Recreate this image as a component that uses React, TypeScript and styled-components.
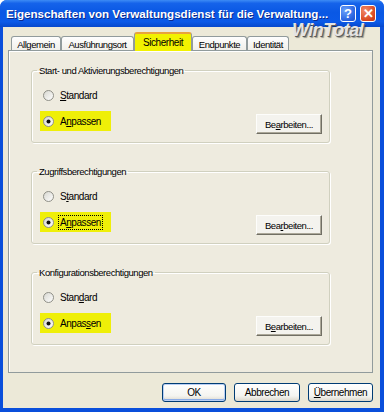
import React from 'react'
import styled, { createGlobalStyle } from 'styled-components'

const GlobalStyle = createGlobalStyle`
  html, body {
    margin: 0;
    padding: 0;
  }
  body {
    width: 384px;
    height: 412px;
    overflow: hidden;
    font-family: "Liberation Sans", Arial, sans-serif;
    font-size: 9.5px;
    letter-spacing: -0.45px;
    color: #000;
  }
`

const Window = styled.div`
  position: relative;
  width: 384px;
  height: 412px;
  box-sizing: border-box;
  display: flex;
  flex-direction: column;
  background: #0A4FDB;
  border-radius: 7px 7px 0 0;
  overflow: hidden;
`

const TitleBar = styled.div`
  height: 27px;
  flex: none;
  display: flex;
  align-items: center;
  padding: 0 8px 0 6px;
  background: linear-gradient(
    to bottom,
    #3d8cf5 0%,
    #1563ea 12%,
    #0a58e4 45%,
    #0b5ae8 80%,
    #0648cc 100%
  );
`

const Title = styled.div`
  flex: 1;
  color: #fff;
  font-weight: bold;
  font-size: 11.6px;
  letter-spacing: 0;
  white-space: nowrap;
  text-shadow: 1px 1px 0 #0c2a8c;
`

const TitleButton = styled.div<{ $kind: 'help' | 'close' }>`
  width: 16px;
  height: 17px;
  flex: none;
  box-sizing: border-box;
  margin-left: 4px;
  border: 1px solid #fff;
  border-radius: 3px;
  display: flex;
  align-items: center;
  justify-content: center;
  color: #fff;
  font-weight: bold;
  font-size: 13px;
  line-height: 14px;
  letter-spacing: 0;
  background: ${(p) =>
    p.$kind === 'close'
      ? 'radial-gradient(circle at 30% 30%, #f28b6a, #d9461f 70%, #c13a16)'
      : 'radial-gradient(circle at 30% 30%, #6aa2fb, #2963e0 70%, #1d4fc8)'};
`

const Watermark = styled.div`
  position: absolute;
  left: 292px;
  top: 23px;
  font-size: 18px;
  line-height: 14px;
  font-weight: bold;
  font-style: italic;
  letter-spacing: -0.5px;
  color: #e4e4e4;
  text-shadow: 1px 1px 0 #5a5a5a, 2px 2px 1px rgba(0, 0, 0, 0.35);
  pointer-events: none;
`

const Body = styled.div`
  flex: 1;
  margin: 0 4px 4px 3px;
  background: #ece9d8;
  display: flex;
  flex-direction: column;
  padding: 5px 7px 6px 5px;
`

const TabStrip = styled.div`
  display: flex;
  align-items: flex-end;
  height: 19px;
  margin: 0 0 -1px 3px;
  position: relative;
  z-index: 1;
`

const Tab = styled.div<{ $w: number; $active?: boolean }>`
  width: ${(p) => p.$w}px;
  height: ${(p) => (p.$active ? 19 : 14)}px;
  margin-bottom: ${(p) => (p.$active ? 0 : 1)}px;
  box-sizing: border-box;
  border: 1px solid #919b9c;
  border-bottom: none;
  border-top: ${(p) => (p.$active ? '2px solid #e8a33c' : '1px solid #919b9c')};
  border-radius: 3px 3px 0 0;
  background: ${(p) =>
    p.$active ? '#f2f200' : 'linear-gradient(to bottom, #fefefe, #f1f0ea)'};
  display: flex;
  align-items: center;
  justify-content: center;
  white-space: nowrap;
  font-size: ${(p) => (p.$active ? 10 : 9.5)}px;
  padding-top: ${(p) => (p.$active ? 0 : 1)}px;
`

const Panel = styled.div`
  height: 323px;
  flex: none;
  box-sizing: border-box;
  border: 1px solid #919b9c;
  box-shadow: inset 1px 1px 0 #fff;
  background: #eeebdf;
  padding: 14px 42px 0 22px;
  display: flex;
  flex-direction: column;
  gap: 23px;
`

const Group = styled.fieldset`
  margin: 0;
  min-width: 0;
  padding: 0 7px 8px 8px;
  border: 1px solid #d0d0bf;
  border-radius: 3px;
  box-shadow: 1px 1px 0 #fff, inset 1px 1px 0 #fff;
`

const Legend = styled.legend`
  padding: 0 2px;
  margin-left: -3px;
  line-height: 11px;
`

const Options = styled.div`
  display: flex;
  flex-direction: column;
  gap: 6px;
  margin-top: 9px;
`

const Row = styled.div`
  display: flex;
  justify-content: space-between;
  align-items: flex-start;
`

const Option = styled.label<{ $marked?: boolean }>`
  display: inline-flex;
  align-items: center;
  align-self: flex-start;
  gap: 5px;
  height: 20px;
  padding: 0 9px 0 3px;
  background: ${(p) => (p.$marked ? '#efef08' : 'transparent')};
`

const Caption = styled.span<{ $focus?: boolean }>`
  padding: 0 1px;
  outline: ${(p) => (p.$focus ? '1px dotted #000' : 'none')};
  line-height: 13px;
  font-size: 10px;
`

const Key = styled.u`
  text-decoration: underline;
`

const ClassicButton = styled.div`
  width: 66px;
  height: 20px;
  margin-top: 3px;
  box-sizing: border-box;
  border: 1px solid;
  border-color: #fdfdfb #716f64 #716f64 #fdfdfb;
  box-shadow: inset -1px -1px 0 #aca899;
  background: #f4f3ee;
  display: flex;
  align-items: center;
  justify-content: center;
`

const Footer = styled.div`
  display: flex;
  justify-content: flex-end;
  gap: 8px;
  margin-top: 10px;
`

const XpButton = styled.div<{ $w: number; $default?: boolean }>`
  width: ${(p) => p.$w}px;
  height: 19px;
  box-sizing: border-box;
  border: 1px solid #003c74;
  border-radius: 3px;
  background: linear-gradient(to bottom, #ffffff, #f4f4f0 70%, #dcd8cc);
  box-shadow: ${(p) =>
    p.$default ? 'inset 0 0 0 1px #b9cff4, inset 0 -1px 0 1px #8aabe6' : 'none'};
  display: flex;
  align-items: center;
  justify-content: center;
  font-size: 10px;
`

function Radio({ checked }: { checked?: boolean }) {
  return (
    <svg width="11" height="11" viewBox="0 0 11 11">
      <defs>
        <linearGradient id="rg" x1="0" y1="0" x2="1" y2="1">
          <stop offset="0" stopColor="#d6d6cf" />
          <stop offset="1" stopColor="#ffffff" />
        </linearGradient>
      </defs>
      <circle cx="5.5" cy="5.5" r="5" fill="url(#rg)" stroke="#8f8f87" strokeWidth="1" />
      {checked && <circle cx="5.5" cy="5.5" r="2" fill="#111" />}
    </svg>
  )
}

type GroupData = {
  title: string
  standard: [string, string, string]
  custom: [string, string, string]
  edit: [string, string, string]
  focus?: boolean
}

const groups: GroupData[] = [
  {
    title: 'Start- und Aktivierungsberechtigungen',
    standard: ['', 'S', 'tandard'],
    custom: ['A', 'n', 'passen'],
    edit: ['Be', 'a', 'rbeiten...'],
  },
  {
    title: 'Zugriffsberechtigungen',
    standard: ['S', 't', 'andard'],
    custom: ['A', 'n', 'passen'],
    edit: ['Bea', 'r', 'beiten...'],
    focus: true,
  },
  {
    title: 'Konfigurationsberechtigungen',
    standard: ['Stan', 'd', 'ard'],
    custom: ['Anpas', 's', 'en'],
    edit: ['B', 'e', 'arbeiten...'],
  },
]

const Label = ({ parts }: { parts: [string, string, string] }) => (
  <>
    {parts[0]}
    <Key>{parts[1]}</Key>
    {parts[2]}
  </>
)

export default function App() {
  return (
    <Window>
      <GlobalStyle />
      <TitleBar>
        <Title>Eigenschaften von Verwaltungsdienst für die Verwaltung...</Title>
        <TitleButton $kind="help">?</TitleButton>
        <TitleButton $kind="close">✕</TitleButton>
      </TitleBar>
      <Watermark>WinTotal</Watermark>
      <Body>
        <TabStrip>
          <Tab $w={50}>Allgemein</Tab>
          <Tab $w={73}>Ausführungsort</Tab>
          <Tab $w={58} $active>
            Sicherheit
          </Tab>
          <Tab $w={55}>Endpunkte</Tab>
          <Tab $w={42}>Identität</Tab>
        </TabStrip>
        <Panel>
          {groups.map((g) => (
            <Group key={g.title}>
              <Legend>{g.title}</Legend>
              <Options>
                <Option>
                  <Radio />
                  <Caption>
                    <Label parts={g.standard} />
                  </Caption>
                </Option>
                <Row>
                  <Option $marked>
                    <Radio checked />
                    <Caption $focus={g.focus}>
                      <Label parts={g.custom} />
                    </Caption>
                  </Option>
                  <ClassicButton>
                    <Label parts={g.edit} />
                  </ClassicButton>
                </Row>
              </Options>
            </Group>
          ))}
        </Panel>
        <Footer>
          <XpButton $w={64} $default>
            OK
          </XpButton>
          <XpButton $w={66}>Abbrechen</XpButton>
          <XpButton $w={65}>
            <Key>Ü</Key>bernehmen
          </XpButton>
        </Footer>
      </Body>
    </Window>
  )
}
